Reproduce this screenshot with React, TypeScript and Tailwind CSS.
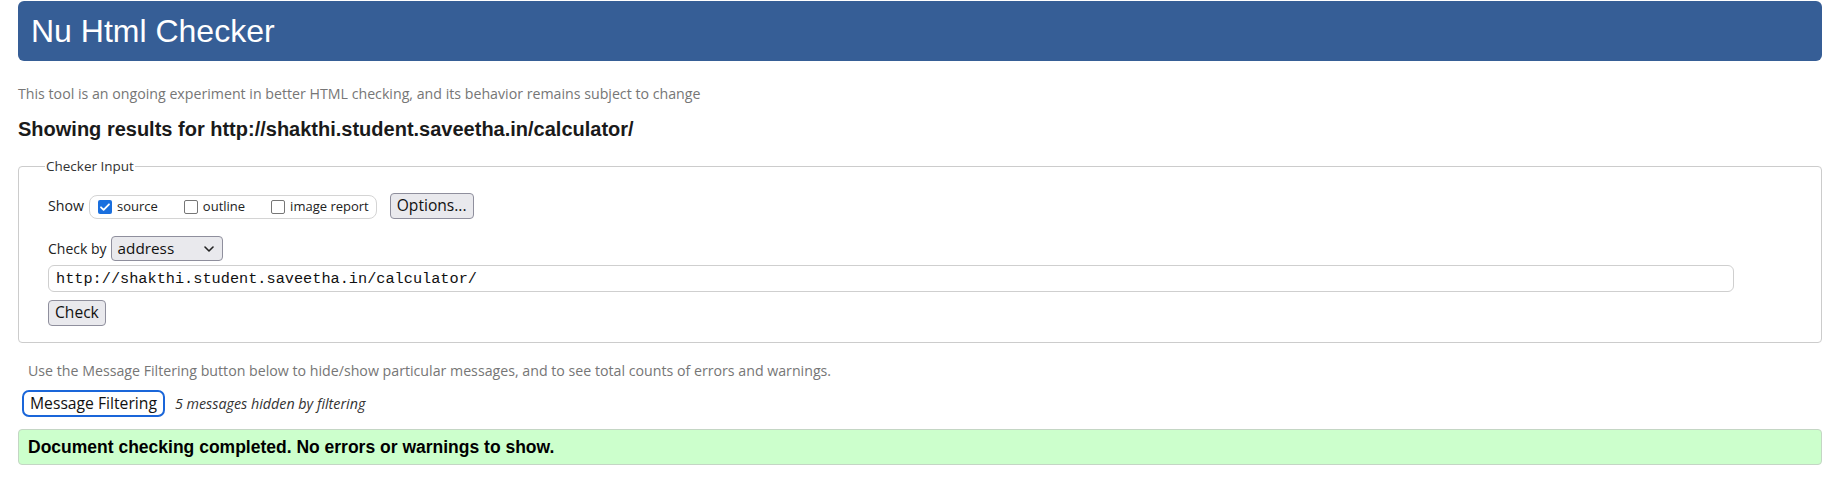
function CheckBox({ checked }: { checked?: boolean }) {
  if (checked) {
    return (
      <span className="flex h-[14px] w-[14px] items-center justify-center rounded-[2px] bg-[#1a6fde]">
        <svg viewBox="0 0 14 14" className="h-[14px] w-[14px]">
          <path d="M3 7.3l2.6 2.6L11 4.3" fill="none" stroke="#fff" strokeWidth="1.8" strokeLinecap="round" strokeLinejoin="round" />
        </svg>
      </span>
    );
  }
  return <span className="h-[14px] w-[14px] rounded-[2px] border border-[#767676] bg-white"></span>;
}

function ShowOption({ label, checked }: { label: string; checked?: boolean }) {
  return (
    <label className="flex items-center gap-[5px]">
      <CheckBox checked={checked} />
      <span className="text-[13px] text-[#222]">{label}</span>
    </label>
  );
}

export default function App() {
  return (
    <div className="min-h-[477px] bg-white px-[18px] pt-px font-['Open_Sans',sans-serif] text-[#222]">
      <header className="flex h-[60px] items-center rounded-[6px] bg-[#365e96] pl-[13px]">
        <h1 className="font-['Liberation_Sans',Arial,sans-serif] text-[32px] leading-none text-white">
          Nu Html Checker
        </h1>
      </header>

      <p className="mt-[23px] text-[14.2px] leading-[20px] text-[#767676]">
        This tool is an ongoing experiment in better HTML checking, and its behavior remains subject to change
      </p>

      <h2 className="mt-[13px] font-['Liberation_Sans',Arial,sans-serif] text-[20px] font-bold leading-[24px] text-[#1a1a1a]">
        Showing results for http://shakthi.student.saveetha.in/calculator/
      </h2>

      <fieldset className="mt-[16px] rounded-[4px] border border-[#cccccc] px-[29px] pb-[16px]">
        <legend className="-ml-[3px] px-px text-[13.5px] leading-[18px] text-[#333]">Checker Input</legend>

        <div className="mt-[18px] flex h-[26px] items-center">
          <span className="text-[14.2px] text-[#222]">Show</span>
          <div className="ml-[5px] mt-[2px] flex h-[24px] items-center gap-[26px] rounded-[8px] border border-[#d4d4d4] pl-[8px] pr-[7px]">
            <ShowOption label="source" checked />
            <ShowOption label="outline" />
            <ShowOption label="image report" />
          </div>
          <button className="ml-[13px] h-[26px] rounded-[4px] border border-[#8f8f9d] bg-[#e9e9ed] px-[6px] text-[15.6px] leading-none text-[#111]">
            Options...
          </button>
        </div>

        <div className="mt-[17px] flex items-center">
          <span className="text-[14px] text-[#222]">Check by</span>
          <div className="ml-[4px] flex h-[25px] w-[112px] items-center justify-between rounded-[4px] border border-[#8f8f9d] bg-[#e9e9ed] pl-[6px] pr-[8px]">
            <span className="text-[15.3px] leading-none text-[#111]">address</span>
            <svg viewBox="0 0 10 6" className="h-[6px] w-[10px]">
              <path d="M1 1l4 4 4-4" fill="none" stroke="#222" strokeWidth="1.6" strokeLinecap="round" strokeLinejoin="round" />
            </svg>
          </div>
        </div>

        <input
          readOnly
          value="http://shakthi.student.saveetha.in/calculator/"
          className="mt-[4px] block h-[27px] w-[1686px] rounded-[6px] border border-[#cfcfcf] bg-white pl-[7px] font-['Liberation_Mono',monospace] text-[15.25px] text-[#111] outline-none"
        />

        <button className="mt-[8px] block h-[26px] rounded-[4px] border border-[#8f8f9d] bg-[#e9e9ed] px-[6px] text-[15.6px] leading-none text-[#111]">
          Check
        </button>
      </fieldset>

      <p className="ml-[10px] mt-[18px] text-[14.2px] leading-[20px] text-[#767676]">
        Use the Message Filtering button below to hide/show particular messages, and to see total counts of errors and warnings.
      </p>

      <div className="mt-[9px] flex items-center">
        <button className="ml-[4px] h-[27px] rounded-[7px] border-2 border-[#1a66d9] bg-white px-[6px] text-[15.7px] leading-none text-[#111]">
          Message Filtering
        </button>
        <span className="ml-[10px] text-[14.3px] italic text-[#333]">5 messages hidden by filtering</span>
      </div>

      <div className="mt-[12px] flex h-[36px] items-center rounded-[4px] border border-[#c4d6c4] bg-[#ccffcc] pl-[9px]">
        <p className="font-['Liberation_Sans',Arial,sans-serif] text-[17.5px] font-bold text-black">
          Document checking completed. No errors or warnings to show.
        </p>
      </div>
    </div>
  );
}
